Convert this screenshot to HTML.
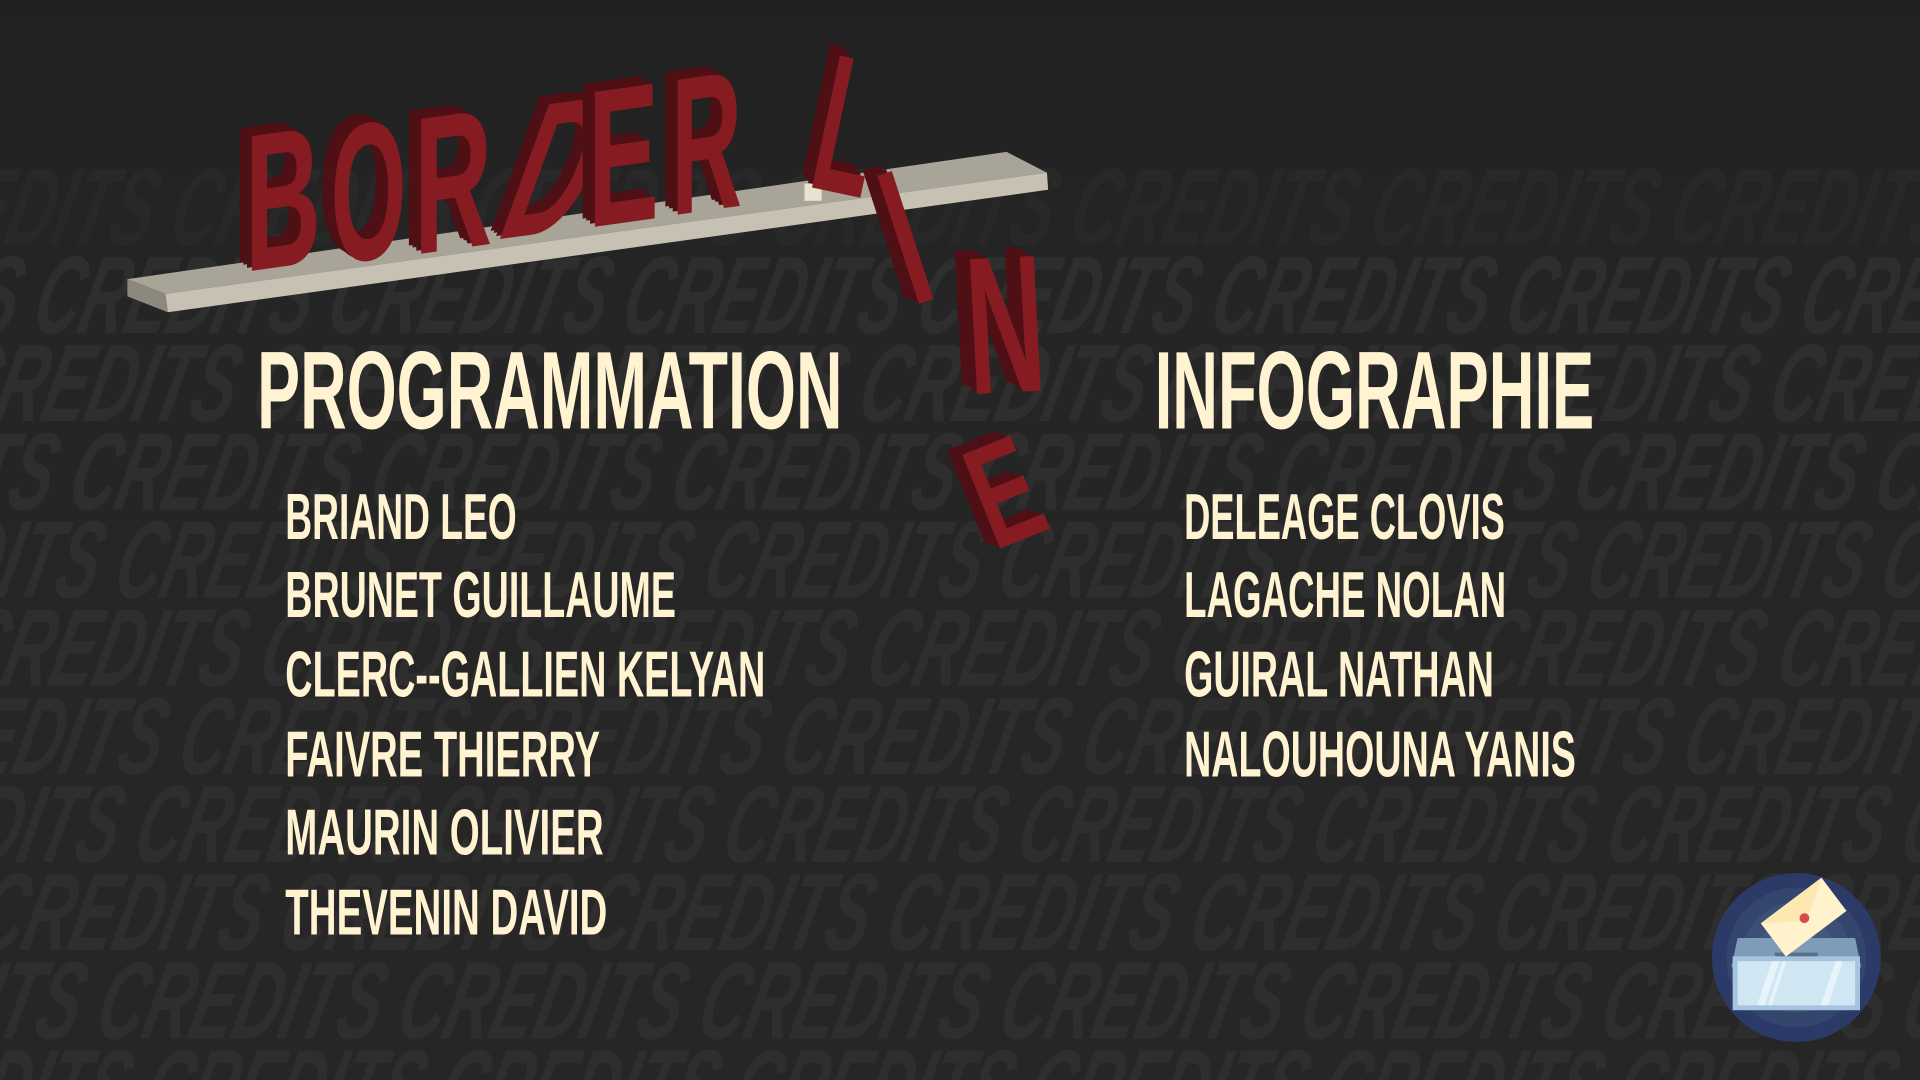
<!DOCTYPE html>
<html><head><meta charset="utf-8"><style>
html,body{margin:0;padding:0;background:#242424;overflow:hidden;width:1920px;height:1080px}
svg{display:block}
.bg{font-family:"Liberation Sans",sans-serif;font-weight:bold;font-style:italic;fill:#2e2e2e}
.t{font-family:"Liberation Sans",sans-serif;font-weight:bold;fill:#fff3d2}
.l{font-family:"Liberation Sans",sans-serif;font-weight:bold}
.d{fill:#4e1015}.f{fill:#861c21}
</style></head><body>
<svg width="1920" height="1080" viewBox="0 0 1568 882" xmlns="http://www.w3.org/2000/svg">
<defs><linearGradient id="g" x1="0" y1="0" x2="0" y2="1"><stop offset="0" stop-color="#212121"/><stop offset="0.3" stop-color="#252525"/><stop offset="1" stop-color="#262626"/></linearGradient></defs>
<rect width="1568" height="882" fill="url(#g)"/>
<g class="bg" font-size="90">
<text x="-60" y="200" textLength="1700" lengthAdjust="spacingAndGlyphs" transform="skewX(-14)" fill="#282828">CREDITS CREDITS CREDITS CREDITS CREDITS CREDITS CREDITS</text>
<text x="-40" y="272" textLength="1720" lengthAdjust="spacingAndGlyphs" transform="skewX(-14)">DITS CREDITS CREDITS CREDITS CREDITS CREDITS CREDITS CRED</text>
<text x="40" y="344" textLength="1720" lengthAdjust="spacingAndGlyphs" transform="skewX(-14)">CREDITS CREDITS CREDITS CREDITS CREDITS CREDITS CREDITS</text>
<text x="60" y="416" textLength="1720" lengthAdjust="spacingAndGlyphs" transform="skewX(-14)">ITS CREDITS CREDITS CREDITS CREDITS CREDITS CREDITS CRED</text>
<text x="80" y="488" textLength="1720" lengthAdjust="spacingAndGlyphs" transform="skewX(-14)">DITS CREDITS CREDITS CREDITS CREDITS CREDITS CREDITS CRED</text>
<text x="100" y="560" textLength="1720" lengthAdjust="spacingAndGlyphs" transform="skewX(-14)">CREDITS CREDITS CREDITS CREDITS CREDITS CREDITS CREDITS</text>
<text x="130" y="632" textLength="1720" lengthAdjust="spacingAndGlyphs" transform="skewX(-14)">EDITS CREDITS CREDITS CREDITS CREDITS CREDITS CREDITS CR</text>
<text x="150" y="704" textLength="1720" lengthAdjust="spacingAndGlyphs" transform="skewX(-14)">DITS CREDITS CREDITS CREDITS CREDITS CREDITS CREDITS CRED</text>
<text x="170" y="776" textLength="1720" lengthAdjust="spacingAndGlyphs" transform="skewX(-14)">CREDITS CREDITS CREDITS CREDITS CREDITS CREDITS CREDITS</text>
<text x="190" y="848" textLength="1720" lengthAdjust="spacingAndGlyphs" transform="skewX(-14)">ITS CREDITS CREDITS CREDITS CREDITS CREDITS CREDITS CRED</text>
<text x="210" y="920" textLength="1720" lengthAdjust="spacingAndGlyphs" transform="skewX(-14)">DITS CREDITS CREDITS CREDITS CREDITS CREDITS CREDITS CRED</text>
</g>
<!-- plank -->
<polygon points="104,228 135,240 855,141 822,124" fill="#a8a498"/>
<polygon points="135,240 855,141 856,155 137,255" fill="#c6c1b3"/>
<polygon points="104,228 135,240 137,255 104,242" fill="#8c887d"/>
<rect x="657" y="150" width="14" height="14" fill="#e8e2cf"/>
<!-- BORDER letters -->
<g class="l" font-size="160">
<g transform="translate(200,222) skewY(-8)">
<text class="d" x="-10" y="-8" textLength="62" lengthAdjust="spacingAndGlyphs">B</text><text class="d" x="-7" y="-6" textLength="62" lengthAdjust="spacingAndGlyphs">B</text><text class="d" x="-4" y="-3" textLength="62" lengthAdjust="spacingAndGlyphs">B</text><text class="f" x="0" y="0" textLength="62" lengthAdjust="spacingAndGlyphs">B</text></g>
<g transform="translate(270,216) skewY(-8)">
<text class="d" x="-10" y="-8" textLength="62" lengthAdjust="spacingAndGlyphs">O</text><text class="d" x="-7" y="-6" textLength="62" lengthAdjust="spacingAndGlyphs">O</text><text class="d" x="-4" y="-3" textLength="62" lengthAdjust="spacingAndGlyphs">O</text><text class="f" x="0" y="0" textLength="62" lengthAdjust="spacingAndGlyphs">O</text></g>
<g transform="translate(338,208) skewY(-8)">
<text class="d" x="-10" y="-8" textLength="64" lengthAdjust="spacingAndGlyphs">R</text><text class="d" x="-7" y="-6" textLength="64" lengthAdjust="spacingAndGlyphs">R</text><text class="d" x="-4" y="-3" textLength="64" lengthAdjust="spacingAndGlyphs">R</text><text class="f" x="0" y="0" textLength="64" lengthAdjust="spacingAndGlyphs">R</text></g>
<g transform="translate(402,196) skewX(-20) skewY(-8)">
<text class="d" x="-10" y="-8" textLength="64" lengthAdjust="spacingAndGlyphs">D</text><text class="d" x="-7" y="-6" textLength="64" lengthAdjust="spacingAndGlyphs">D</text><text class="d" x="-4" y="-3" textLength="64" lengthAdjust="spacingAndGlyphs">D</text><text class="f" x="0" y="0" textLength="64" lengthAdjust="spacingAndGlyphs">D</text></g>
<g transform="translate(480,186) skewY(-8)">
<text class="d" x="-10" y="-8" textLength="58" lengthAdjust="spacingAndGlyphs">E</text><text class="d" x="-7" y="-6" textLength="58" lengthAdjust="spacingAndGlyphs">E</text><text class="d" x="-4" y="-3" textLength="58" lengthAdjust="spacingAndGlyphs">E</text><text class="f" x="0" y="0" textLength="58" lengthAdjust="spacingAndGlyphs">E</text></g>
<g transform="translate(548,176) skewY(-8)">
<text class="d" x="-10" y="-8" textLength="58" lengthAdjust="spacingAndGlyphs">R</text><text class="d" x="-7" y="-6" textLength="58" lengthAdjust="spacingAndGlyphs">R</text><text class="d" x="-4" y="-3" textLength="58" lengthAdjust="spacingAndGlyphs">R</text><text class="f" x="0" y="0" textLength="58" lengthAdjust="spacingAndGlyphs">R</text></g>
<!-- LINE -->
<g transform="translate(658,152) rotate(12)">
<text class="d" x="-10" y="-8" textLength="48" lengthAdjust="spacingAndGlyphs">L</text><text class="d" x="-7" y="-6" textLength="48" lengthAdjust="spacingAndGlyphs">L</text><text class="d" x="-4" y="-3" textLength="48" lengthAdjust="spacingAndGlyphs">L</text><text class="f" x="0" y="0" textLength="48" lengthAdjust="spacingAndGlyphs">L</text></g>
<g transform="translate(745,250) rotate(-18)">
<text class="d" x="-10" y="-8" textLength="24" lengthAdjust="spacingAndGlyphs">I</text><text class="d" x="-7" y="-6" textLength="24" lengthAdjust="spacingAndGlyphs">I</text><text class="d" x="-4" y="-3" textLength="24" lengthAdjust="spacingAndGlyphs">I</text><text class="f" x="0" y="0" textLength="24" lengthAdjust="spacingAndGlyphs">I</text></g>
<g transform="translate(792,322) rotate(-3)">
<text class="d" x="-12" y="-8" textLength="64" lengthAdjust="spacingAndGlyphs">N</text><text class="d" x="-8" y="-6" textLength="64" lengthAdjust="spacingAndGlyphs">N</text><text class="d" x="-4" y="-3" textLength="64" lengthAdjust="spacingAndGlyphs">N</text><text class="f" x="0" y="0" textLength="64" lengthAdjust="spacingAndGlyphs">N</text></g>
<g transform="translate(812,450) rotate(-22)" font-size="120">
<text class="d" x="-10" y="-8" textLength="52" lengthAdjust="spacingAndGlyphs">E</text><text class="d" x="-7" y="-6" textLength="52" lengthAdjust="spacingAndGlyphs">E</text><text class="d" x="-4" y="-3" textLength="52" lengthAdjust="spacingAndGlyphs">E</text><text class="f" x="0" y="0" textLength="52" lengthAdjust="spacingAndGlyphs">E</text></g>
</g>
<!-- headings -->
<g class="t">
<text x="210" y="350" font-size="90" textLength="478" lengthAdjust="spacingAndGlyphs">PROGRAMMATION</text>
<text x="943" y="350" font-size="90" textLength="359" lengthAdjust="spacingAndGlyphs">INFOGRAPHIE</text>
<g font-size="53">
<text x="233" y="440" textLength="189" lengthAdjust="spacingAndGlyphs">BRIAND LEO</text>
<text x="233" y="504" textLength="319" lengthAdjust="spacingAndGlyphs">BRUNET GUILLAUME</text>
<text x="233" y="569" textLength="392" lengthAdjust="spacingAndGlyphs">CLERC--GALLIEN KELYAN</text>
<text x="233" y="634" textLength="257" lengthAdjust="spacingAndGlyphs">FAIVRE THIERRY</text>
<text x="233" y="698" textLength="260" lengthAdjust="spacingAndGlyphs">MAURIN OLIVIER</text>
<text x="233" y="763" textLength="263" lengthAdjust="spacingAndGlyphs">THEVENIN DAVID</text>
<text x="967" y="440" textLength="262" lengthAdjust="spacingAndGlyphs">DELEAGE CLOVIS</text>
<text x="967" y="504" textLength="263" lengthAdjust="spacingAndGlyphs">LAGACHE NOLAN</text>
<text x="967" y="569" textLength="253" lengthAdjust="spacingAndGlyphs">GUIRAL NATHAN</text>
<text x="967" y="634" textLength="320" lengthAdjust="spacingAndGlyphs">NALOUHOUNA YANIS</text>
</g></g>
<!-- ballot icon -->
<g transform="translate(1467,782)">
<circle r="69" fill="#2b3a66"/>
<circle r="57" fill="#34466e"/>
<circle r="45" fill="#3b5074"/>
<circle r="33" fill="#425979"/>
<polygon points="-48,-16 48,-16 53,8 -53,8" fill="#7e9bb8"/>
<polygon points="-18,-4 18,-4 14,10 -14,10" fill="#5a6e88"/>
<g transform="translate(6,-33) rotate(-37)">
<rect x="-31" y="-17" width="62" height="34" fill="#fff2cc"/>
<polygon points="-31,-17 31,-17 0,4" fill="#fde8b2"/>
<circle cx="0" cy="1" r="4" fill="#d9484b"/>
</g>
<rect x="-52" y="-1" width="104" height="44" fill="#a6c4de"/>
<rect x="-48" y="3" width="96" height="36" fill="#d0e6f3"/>
<polygon points="-32,39 -26,39 -14,3 -20,3" fill="#e8f4fb"/>
<polygon points="-23,39 -20,39 -8,3 -11,3" fill="#e8f4fb"/>
<polygon points="20,39 26,39 38,3 32,3" fill="#e8f4fb"/>
</g>
</svg>
</body></html>
